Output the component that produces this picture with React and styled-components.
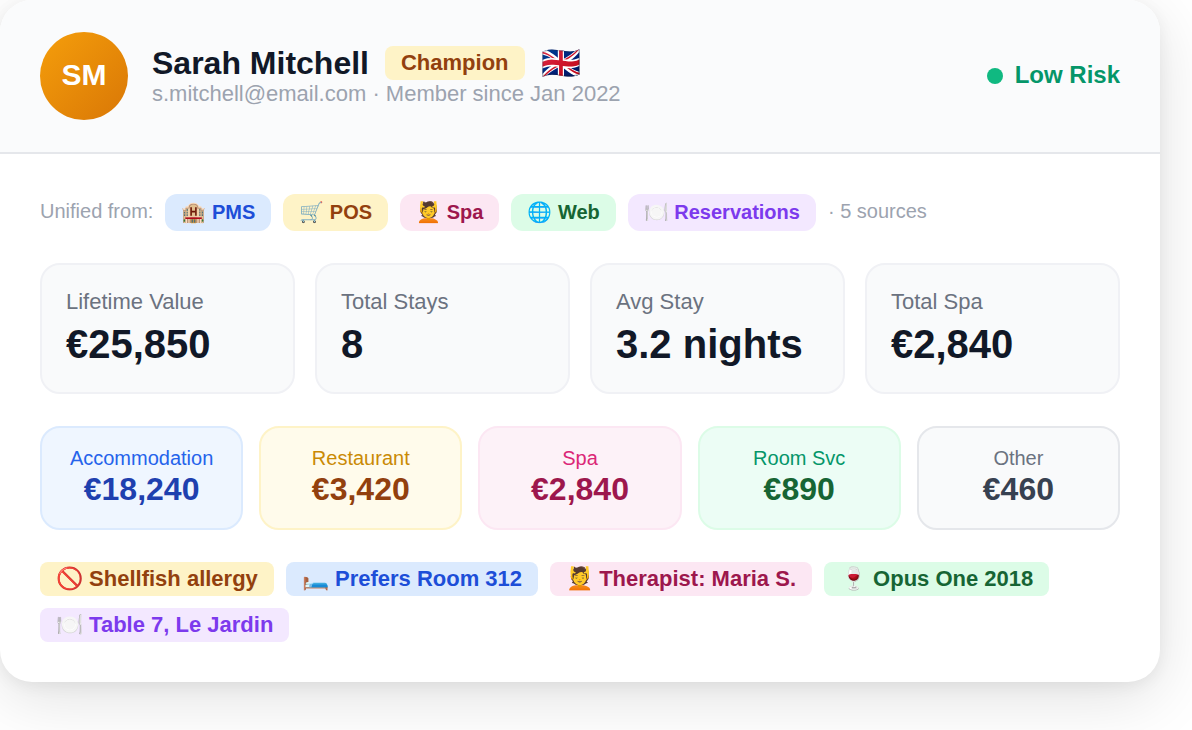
import React from 'react';
import styled, { createGlobalStyle } from 'styled-components';

const GlobalStyle = createGlobalStyle`
  * {
    box-sizing: border-box;
  }

  body {
    margin: 0;
    background: #ffffff;
    font-family: "Liberation Sans", Arial, sans-serif;
    color: #111827;
  }
`;

const tones = {
  blue: { bg: '#dbeafe', text: '#1d4ed8', soft: '#eff6ff', label: '#2563eb', value: '#1e40af' },
  amber: { bg: '#fef3c7', text: '#92400e', soft: '#fffbeb', label: '#ca8a04', value: '#92400e' },
  pink: { bg: '#fce7f3', text: '#9d174d', soft: '#fdf2f8', label: '#db2777', value: '#9d174d' },
  green: { bg: '#dcfce7', text: '#166534', soft: '#ecfdf5', label: '#059669', value: '#166534' },
  purple: { bg: '#f3e8ff', text: '#7c3aed' },
  gray: { bg: '#e5e7eb', soft: '#f9fafb', label: '#6b7280', value: '#374151' },
};

const Page = styled.main`
  padding: 0 32px 48px 0;
`;

const Card = styled.article`
  background: #ffffff;
  border-radius: 32px;
  box-shadow: 0 16px 64px rgba(0, 0, 0, 0.12), 0 4px 16px rgba(0, 0, 0, 0.06);
`;

const Header = styled.header`
  display: flex;
  align-items: center;
  gap: 24px;
  padding: 32px 40px;
  background: #fafbfc;
  border-bottom: 2px solid #e5e7eb;
  border-radius: 32px 32px 0 0;
`;

const Avatar = styled.div`
  display: flex;
  align-items: center;
  justify-content: center;
  width: 88px;
  height: 88px;
  padding-bottom: 2px;
  border-radius: 50%;
  background: linear-gradient(135deg, #f59e0b, #d97706);
  color: #ffffff;
  font-size: 30px;
  font-weight: 700;
`;

const Info = styled.div`
  flex: 1;
`;

const NameRow = styled.div`
  display: flex;
  align-items: center;
  gap: 16px;
  height: 36px;
`;

const Name = styled.h1`
  margin: 0;
  font-size: 32px;
  line-height: 38px;
  font-weight: 700;
`;

const Flag = styled.span`
  font-size: 32px;
  line-height: 38px;
`;

const Contact = styled.p`
  margin: 0;
  color: #9ca3af;
  font-size: 22px;
  line-height: 26px;
`;

const Risk = styled.div`
  display: flex;
  align-items: center;
  gap: 12px;
`;

const RiskLabel = styled.span`
  padding-bottom: 2px;
  color: #059669;
  font-size: 24px;
  font-weight: 700;
`;

const Dot = styled.span`
  width: 16px;
  height: 16px;
  border-radius: 50%;
  background: #10b981;
`;

const Body = styled.div`
  display: flex;
  flex-direction: column;
  gap: 32px;
  padding: 40px;
`;

const Sources = styled.div`
  display: flex;
  flex-wrap: wrap;
  align-items: center;
  gap: 12px;
  font-size: 20px;
  line-height: 25px;
`;

const SourceNote = styled.span`
  padding-bottom: 2px;
  color: #9ca3af;
`;

const SourceChip = styled.span`
  padding: 6px 16px;
  border-radius: 12px;
  background: ${({ $tone }) => tones[$tone].bg};
  color: ${({ $tone }) => tones[$tone].text};
  font-weight: 700;
`;

const Stats = styled.div`
  display: grid;
  grid-template-columns: repeat(4, 1fr);
  gap: 20px;
`;

const Stat = styled.div`
  padding: 24px 24px 26px;
  border: 2px solid #f0f1f5;
  border-radius: 20px;
  background: #f9fafb;
`;

const StatLabel = styled.div`
  margin-bottom: 8px;
  color: #6b7280;
  font-size: 22px;
  line-height: 25px;
`;

const StatValue = styled.div`
  font-size: 40px;
  line-height: 44px;
  font-weight: 700;
`;

const Spending = styled.div`
  display: grid;
  grid-template-columns: repeat(5, 1fr);
  gap: 16px;
`;

const Spend = styled.div`
  padding: 18px 12px 20px;
  border: 2px solid ${({ $tone }) => tones[$tone].bg};
  border-radius: 20px;
  background: ${({ $tone }) => tones[$tone].soft};
  text-align: center;
`;

const SpendLabel = styled.div`
  color: ${({ $tone }) => tones[$tone].label};
  font-size: 20px;
  line-height: 24px;
`;

const SpendValue = styled.div`
  color: ${({ $tone }) => tones[$tone].value};
  font-size: 32px;
  line-height: 38px;
  font-weight: 700;
`;

const Tags = styled.div`
  display: flex;
  flex-wrap: wrap;
  gap: 12px;
`;

const Tag = styled.span`
  padding: 4px 16px;
  border-radius: 8px;
  background: ${({ $tone }) => tones[$tone].bg};
  color: ${({ $tone }) => tones[$tone].text};
  font-size: 22px;
  line-height: 26px;
  font-weight: 700;
`;

const sources = [
  { label: '🏨 PMS', tone: 'blue' },
  { label: '🛒 POS', tone: 'amber' },
  { label: '💆 Spa', tone: 'pink' },
  { label: '🌐 Web', tone: 'green' },
  { label: '🍽️ Reservations', tone: 'purple' },
];

const stats = [
  { label: 'Lifetime Value', value: '€25,850' },
  { label: 'Total Stays', value: '8' },
  { label: 'Avg Stay', value: '3.2 nights' },
  { label: 'Total Spa', value: '€2,840' },
];

const spending = [
  { label: 'Accommodation', value: '€18,240', tone: 'blue' },
  { label: 'Restaurant', value: '€3,420', tone: 'amber' },
  { label: 'Spa', value: '€2,840', tone: 'pink' },
  { label: 'Room Svc', value: '€890', tone: 'green' },
  { label: 'Other', value: '€460', tone: 'gray' },
];

const tags = [
  { label: '🚫 Shellfish allergy', tone: 'amber' },
  { label: '🛏️ Prefers Room 312', tone: 'blue' },
  { label: '💆 Therapist: Maria S.', tone: 'pink' },
  { label: '🍷 Opus One 2018', tone: 'green' },
  { label: '🍽️ Table 7, Le Jardin', tone: 'purple' },
];

const App = () => {
  return (
    <Page>
      <GlobalStyle />
      <Card>
        <Header>
          <Avatar>SM</Avatar>
          <Info>
            <NameRow>
              <Name>Sarah Mitchell</Name>
              <Tag $tone="amber">Champion</Tag>
              <Flag>🇬🇧</Flag>
            </NameRow>
            <Contact>s.mitchell@email.com · Member since Jan 2022</Contact>
          </Info>
          <Risk>
            <Dot />
            <RiskLabel>Low Risk</RiskLabel>
          </Risk>
        </Header>
        <Body>
          <Sources>
            <SourceNote>Unified from:</SourceNote>
            {sources.map((source) => (
              <SourceChip key={source.label} $tone={source.tone}>{source.label}</SourceChip>
            ))}
            <SourceNote>· 5 sources</SourceNote>
          </Sources>
          <Stats>
            {stats.map((stat) => (
              <Stat key={stat.label}>
                <StatLabel>{stat.label}</StatLabel>
                <StatValue>{stat.value}</StatValue>
              </Stat>
            ))}
          </Stats>
          <Spending>
            {spending.map((item) => (
              <Spend key={item.label} $tone={item.tone}>
                <SpendLabel $tone={item.tone}>{item.label}</SpendLabel>
                <SpendValue $tone={item.tone}>{item.value}</SpendValue>
              </Spend>
            ))}
          </Spending>
          <Tags>
            {tags.map((tag) => (
              <Tag key={tag.label} $tone={tag.tone}>{tag.label}</Tag>
            ))}
          </Tags>
        </Body>
      </Card>
    </Page>
  );
};

export default App;
